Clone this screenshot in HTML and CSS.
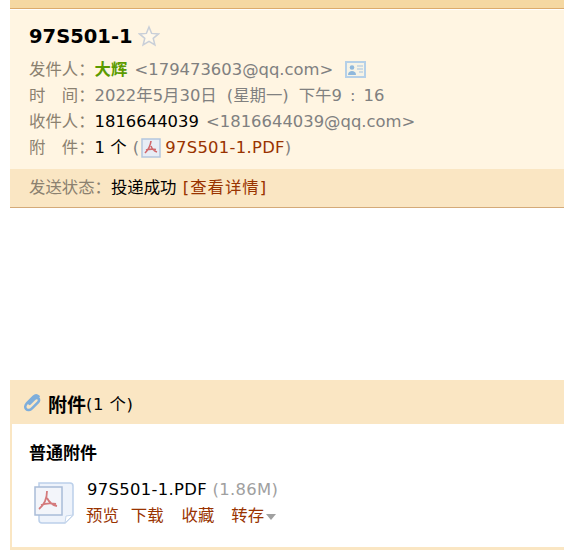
FILE: index.html
```html
<!DOCTYPE html>
<html>
<head>
    <meta charset="utf-8">
    <title>97S501-1</title>
    <link rel="stylesheet" href="styles.css">
</head>
<body>
    <div class="topbar"></div>

    <div class="mailhead">
        <div class="subject">
            <span class="subject-text">97S501-1</span>
            <svg class="star" width="22" height="22" viewBox="0 0 22 22"><path d="M11 2l2.6 6.400 6.900.5-5.300 4.400 1.700 6.700L11 16.400 5.100 20l1.700-6.700L1.500 8.900l6.900-.5z" fill="#fff8ea" stroke="#c9cfd8" stroke-width="1.500"/></svg>
        </div>
        <div class="row">
            <span class="label">发件人：</span><b class="sender">大辉</b>
            <span class="gray addr">&lt;179473603@qq.com&gt;</span>
            <svg class="card" width="21" height="17" viewBox="0 0 21 17"><rect x="1" y="1" width="19" height="15" fill="#f6f3e6" stroke="#b5d0e8" stroke-width="2"/><circle cx="7" cy="6.500" r="2.300" fill="#8fb8dc"/><path d="M3 14c0-3 2-4 4-4s4 1 4 4z" fill="#8fb8dc"/><path d="M12 5h6M12 8h6M14 11h4" stroke="#a5c4e0" stroke-width="1.200"/></svg>
        </div>
        <div class="row">
            <span class="label">时<i class="gap"></i>间：</span><span class="gray">2022年5月30日<span class="week">(星期一)</span>下午9<span class="timecolon">:</span>16</span>
        </div>
        <div class="row">
            <span class="label">收件人：</span><span>1816644039</span>
            <span class="gray addr">&lt;1816644039@qq.com&gt;</span>
        </div>
        <div class="row">
            <span class="label">附<i class="gap"></i>件：</span><span>1 个</span>
            <span class="gray paren">(</span><svg class="pdf-small" width="20" height="20" viewBox="0 0 20 20"><rect x="1" y="1" width="18" height="18" fill="#e8edf5" stroke="#b4c6de" stroke-width="1.500"/><path d="M10 3c-.5 4-2 8-6 12M10 8c1 3 3 5 6 6M5 12c3-1 7-1 10-.5" fill="none" stroke="#d0676a" stroke-width="1.600"/></svg><a class="link filelink" href="#">97S501-1.PDF</a><span class="gray">)</span>
        </div>
    </div>
    <div class="sendstatus">
        <span class="label">发送状态：</span><span>投递成功</span>
        <a class="link detail" href="#">[查看详情]</a>
    </div>

    <div class="attach">
        <div class="attach-title">
            <svg class="clip" width="18" height="20" viewBox="0 0 18 20"><path d="M14.500 3.500c-1.500-1.500-3.500-1.300-5 .2L3 10.200c-2 2-2.200 4.500-.8 5.900s3.800 1.200 5.800-.8l6-6c1.200-1.200 1.400-2.800.4-3.800s-2.600-.8-3.800.4l-5 5" fill="none" stroke="#7eaedb" stroke-width="2.600" stroke-linecap="round"/></svg>
            <b>附件</b><span class="count">(1 个)</span>
        </div>
        <div class="attach-body">
            <div class="attach-kind">普通附件</div>
            <div class="attach-item">
                <svg class="pdf-big" width="42" height="44" viewBox="0 0 42 44"><path d="M5 2h31a3 3 0 0 1 3 3v29l-8 8H8a3 3 0 0 1-3-3z" fill="#eef3fb" stroke="#bcd0ea" stroke-width="1.500"/><path d="M31 42l1-7 7-1z" fill="#fff" stroke="#c5d6ec"/><rect x="1" y="6" width="27" height="28" fill="#f3f5fa" stroke="#a9bcd8" stroke-width="1.500"/><path d="M13 10c0 6-2 13-8 18M13 17c2 4 5 7 10 8M7 24c5-2 10-2 15-1" fill="none" stroke="#d47a7c" stroke-width="1.800"/></svg>
                <div class="attach-info">
                    <div class="filename">97S501-1.PDF <span class="size">(1.86M)</span></div>
                    <div class="actions">
                        <a class="link" href="#">预览</a>
                        <a class="link" href="#">下载</a>
                        <a class="link" href="#">收藏</a>
                        <a class="link" href="#">转存<i class="caret"></i></a>
                    </div>
                </div>
            </div>
        </div>
    </div>
</body>
</html>
```

FILE: styles.css
```css
html, body
{
    margin: 0;
    padding: 0;
}
body
{
    height: 559px;
    overflow: hidden;
    padding-left: 10px;
    background: #FFFFFF;
    color: #000000;
    font-family: "DejaVu Sans", "Noto Sans CJK SC", sans-serif;
    font-size: 16.4px;
}
a
{
    text-decoration: none;
}
.topbar
{
    height: 8px;
    background: #f5d8a2;
    border-bottom: 1px solid #dcab6c;
}
.mailhead
{
    background: #fff5e2;
    border-top: 1px solid #ffffff;
    padding: 11px 0 0 19px;
    height: 160px;
    box-sizing: border-box;
}
.subject
{
    display: flex;
    align-items: center;
    height: 30px;
    margin-bottom: 6px;
}
.subject-text
{
    font-size: 19.5px;
    font-weight: bold;
}
.star
{
    margin-left: 5px;
}
.row
{
    height: 26px;
    line-height: 26px;
    white-space: nowrap;
}
.label
{
    color: #8b8170;
}
.gap
{
    display: inline-block;
    width: 1em;
}
.gray
{
    color: #808080;
}
.addr
{
    margin-left: 2px;
}
.week
{
    margin: 0 10px;
}
.timecolon
{
    margin: 0 8px;
}
.sender
{
    color: #5c9b00;
}
.card
{
    vertical-align: -3px;
    margin-left: 6px;
}
.paren
{
    margin-left: 1px;
}
.pdf-small
{
    vertical-align: -5px;
    margin: 0 4px 0 2px;
}
.link
{
    color: #993300;
}
.filelink
{
    letter-spacing: 0.3px;
}
.detail
{
    letter-spacing: 1px;
    margin-left: 1px;
}
.sendstatus
{
    height: 38px;
    line-height: 38px;
    background: #fae6c3;
    border-bottom: 1px solid #d4aa78;
    padding-left: 19px;
}
.attach
{
    margin-top: 172px;
    background: #fae6c3;
    padding: 0 0 3px 2px;
}
.attach-title
{
    display: flex;
    align-items: center;
    height: 44px;
    padding: 2px 0 0 12px;
    box-sizing: border-box;
}
.attach-title b
{
    font-size: 19px;
    margin-left: 6px;
}
.count
{
    letter-spacing: 0.5px;
}
.attach-body
{
    background: #FFFFFF;
    height: 123px;
    padding: 17px 0 0 17px;
    box-sizing: border-box;
}
.attach-kind
{
    font-weight: bold;
    font-size: 17px;
    height: 24px;
    line-height: 24px;
}
.attach-item
{
    display: flex;
    margin-top: 12px;
}
.pdf-big
{
    margin: 4px 11px 0 5px;
}
.attach-info
{
    line-height: 26px;
}
.filename
{
    letter-spacing: 0.33px;
}
.size
{
    color: #a0a0a0;
}
.actions
{
    display: flex;
    gap: 11px;
    margin-left: -1px;
}
.actions a:nth-child(1)
{
    margin-right: 1px;
}
.actions a:nth-child(3)
{
    margin-left: 7px;
}
.actions a:nth-child(4)
{
    margin-left: 6px;
}
.caret
{
    display: inline-block;
    margin-left: 2px;
    vertical-align: 1px;
    border-top: 6px solid #a0a0a0;
    border-left: 5px solid transparent;
    border-right: 5px solid transparent;
}
```
